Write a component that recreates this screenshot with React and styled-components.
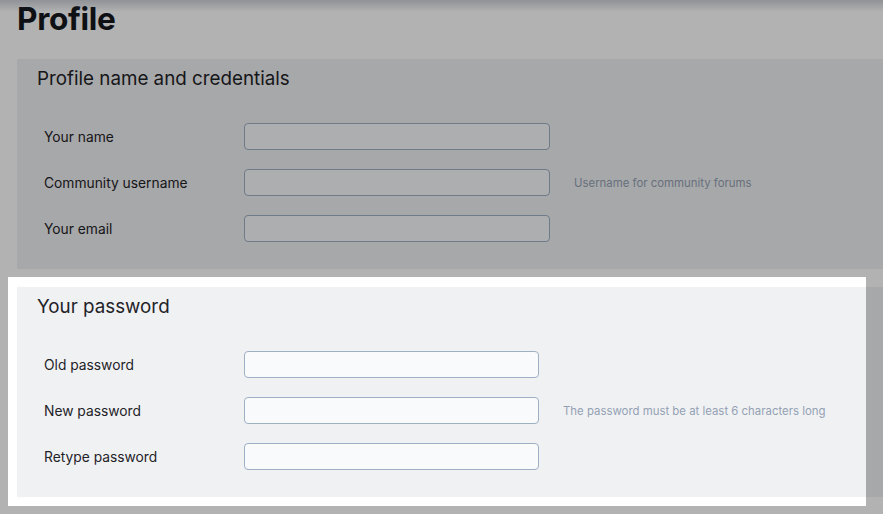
import React from 'react'
import styled, { createGlobalStyle } from 'styled-components'

const GlobalStyle = createGlobalStyle`
  html, body {
    margin: 0;
    padding: 0;
    background: #ffffff;
    overflow: hidden;
  }
  body {
    font-family: Inter, "Noto Sans", "Liberation Sans", sans-serif;
    color: #1f2328;
  }
`

const Page = styled.div`
  position: relative;
  width: 883px;
  height: 514px;
  padding-left: 17px;
  box-sizing: border-box;
  overflow: hidden;
`

const TopShade = styled.div`
  position: absolute;
  top: 0;
  left: 0;
  right: 0;
  height: 12px;
  background: linear-gradient(rgba(40, 50, 70, 0.25), rgba(40, 50, 70, 0));
  z-index: 3;
`

const Title = styled.h1`
  margin: 0;
  padding-top: 2px;
  font-size: 31.6px;
  font-weight: 700;
  line-height: 34px;
  letter-spacing: -0.3px;
  color: #15181d;
`

const Sections = styled.div`
  display: flex;
  flex-direction: column;
  gap: 18px;
  margin-top: 23px;
`

const Section = styled.section`
  position: relative;
  background: #f0f1f3;
  padding: 8px 0 27px 20px;
`

const Heading = styled.h2`
  margin: 0 0 34px;
  padding-top: 1px;
  font-size: 18.8px;
  font-weight: 400;
  line-height: 21px;
  color: #1f2328;
`

const Rows = styled.div`
  display: flex;
  flex-direction: column;
  gap: 19px;
  padding-left: 7px;
`

const Row = styled.div`
  display: grid;
  grid-template-columns: 200px ${({ $inputWidth }) => $inputWidth}px auto;
  align-items: center;
`

const Label = styled.label`
  padding-top: 2px;
  font-size: 13.8px;
  line-height: 25px;
  color: #1f2328;
`

const Input = styled.input`
  box-sizing: border-box;
  width: 100%;
  height: 27px;
  border: 1px solid #9fb0c5;
  border-radius: 4px;
  background: #f8fafb;
  font: inherit;
  outline: none;
`

const Help = styled.span`
  padding-left: 24px;
  padding-top: 1px;
  font-size: 11.4px;
  color: #94a1b3;
`

/* hole in the dimming layer around the highlighted section */
const Spotlight = styled.div`
  position: absolute;
  top: -10px;
  left: -9px;
  bottom: -9px;
  width: 858px;
  background: transparent;
  box-shadow: 0 0 0 2000px rgba(0, 0, 0, 0.3);
  z-index: 2;
  pointer-events: none;
`

const Field = ({ label, width, help, type }) => (
  <Row $inputWidth={width}>
    <Label>{label}</Label>
    <Input type={type || 'text'} />
    {help ? <Help>{help}</Help> : <span />}
  </Row>
)

export default function App() {
  return (
    <>
      <GlobalStyle />
      <Page>
        <TopShade />
        <Title>Profile</Title>
        <Sections>
          <Section>
            <Heading>Profile name and credentials</Heading>
            <Rows>
              <Field label="Your name" width={306} />
              <Field label="Community username" width={306} help="Username for community forums" />
              <Field label="Your email" width={306} />
            </Rows>
          </Section>
          <Section>
            <Spotlight />
            <Heading>Your password</Heading>
            <Rows>
              <Field label="Old password" width={295} type="password" />
              <Field
                label="New password"
                width={295}
                type="password"
                help="The password must be at least 6 characters long"
              />
              <Field label="Retype password" width={295} type="password" />
            </Rows>
          </Section>
        </Sections>
      </Page>
    </>
  )
}
